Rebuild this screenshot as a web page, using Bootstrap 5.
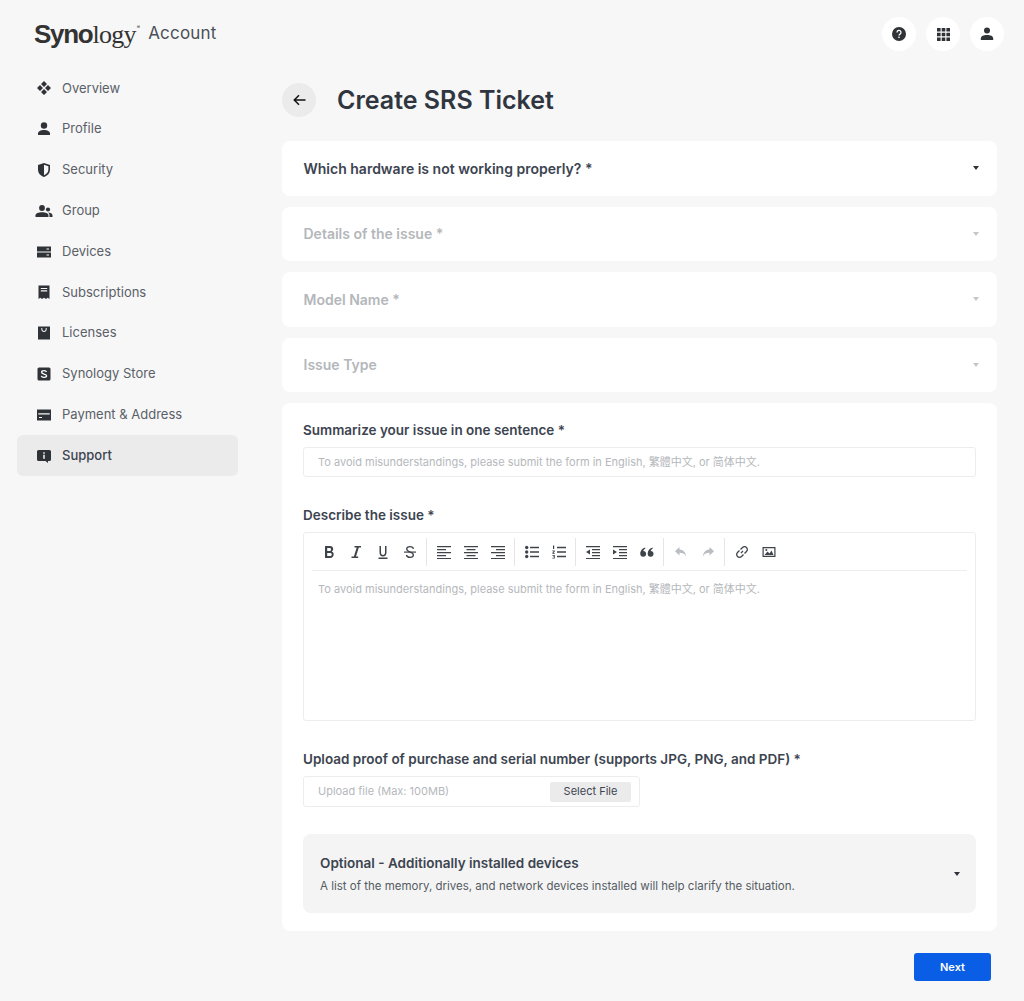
<!DOCTYPE html>
<html lang="en">
<head>
<meta charset="utf-8">
<title>Create SRS Ticket</title>
<link href="https://cdn.jsdelivr.net/npm/bootstrap@5.3.0/dist/css/bootstrap.min.css" rel="stylesheet">
<style>
html,body{height:1001px;overflow:hidden}
body{background:#f7f7f7;font-family:Inter,"Noto Sans CJK TC",sans-serif;color:#3c4450;font-size:13px}
.shell{width:1024px;height:1001px}
.top-bar{height:68px;padding:0 20px 0 34px}
.logo-mark{font-size:26px;line-height:1;color:#333;display:flex;align-items:baseline;letter-spacing:-1.3px}
.logo-a{font-family:"Liberation Sans",sans-serif;font-weight:700}
.logo-b{font-family:"Liberation Serif",serif;letter-spacing:-.7px}
.logo-r{font-size:5px;align-self:flex-start;margin:4px 0 0 1px;letter-spacing:0}
.logo-word{font-size:17px;margin-left:8px;color:#4a5058;letter-spacing:.2px}
.round-btn{width:34px;height:34px;border-radius:50%;background:#fff;border:0;padding:0;display:flex;align-items:center;justify-content:center}
.side-col{width:282px;padding-left:17px;flex:none}
.side-link{width:221px;height:40.8px;padding-left:19px;border-radius:6px;color:#5a6068;font-size:13px;text-decoration:none;gap:10px}
.side-link svg{width:16px;height:16px;flex:none;fill:#2f3237}
.side-link.here{background:#ebebeb;color:#3c4450;font-weight:500}
.main-col{width:715px;flex:none}
.title-row{height:73px;padding-top:15px;align-items:flex-start}
.back-btn{width:34px;height:34px;border-radius:50%;background:#ebebeb;border:0;padding:0;display:flex;align-items:center;justify-content:center}
.page-title{font-size:25px;line-height:34px;font-weight:600;color:#2f3640;margin:0 0 0 21px;letter-spacing:0}
.pick-card{height:54.5px;background:#fff;border-radius:8px;padding:0 18px 0 21.5px;margin-bottom:11px;font-size:14px;font-weight:600;color:#3c4450}
.pick-card.off{color:#b4b7bb}
.caret{width:0;height:0;border-left:3.5px solid transparent;border-right:3.5px solid transparent;border-top:4px solid #2f3237}
.off .caret{border-top-color:#c4c6c9}
.form-panel{background:#fff;border-radius:8px;height:528px;padding:18px 21px 0}
.fld-label{font-size:13.5px;line-height:18px;font-weight:600;color:#3c4450;margin:0 0 8px}
.fld-box{height:30px;border:1px solid #ededed;border-radius:3px;padding:0 14px;font-size:11px;color:#b5b8bc;margin-bottom:29px}
.editor-box{height:189px;border:1px solid #ededed;border-radius:3px;padding:0 8px 0 8px;margin-bottom:29px}
.tool-row{height:38px;border-bottom:1px solid #ededed}
.tool-grp{display:flex;align-items:center;height:28px;padding:0 3px 0 3px;border-right:1px solid #e6e6e6}
.tool-grp:last-child{border-right:0}
.tool{width:27px;height:20px;display:flex;align-items:center;justify-content:center}
.tool svg{width:14px;height:14px;fill:#3f444b}
.tool.dim svg{fill:#b9bcc0}
.editor-hint{font-size:11px;color:#b5b8bc;padding:10px 6px}
.upload-box{width:337px;height:31px;border:1px solid #ededed;border-radius:3px;padding:0 8px 0 14px;font-size:11px;color:#b5b8bc;margin-bottom:27px}
.pick-file{width:81px;height:20px;background:#ebebeb;border:0;border-radius:2px;font-size:11px;color:#3c4450;padding:0}
.opt-box{height:79px;background:#f4f4f4;border-radius:8px;padding:0 16px 0 17px}
.opt-title{font-size:13.5px;font-weight:600;color:#3c4450;line-height:18px;margin-bottom:6px}
.opt-sub{font-size:11.5px;color:#555b63;line-height:16px}
.foot-row{padding-top:22px;padding-right:6px}
.next-btn{width:77px;height:28px;background:#0a5ee6;color:#fff;border:0;border-radius:3px;font-size:11px;font-weight:600;padding:0}
</style>
</head>
<body>
<div class="shell d-flex flex-column">
  <header class="top-bar d-flex align-items-center justify-content-between">
    <div class="d-flex align-items-center">
      <div class="logo-mark"><span class="logo-a">Syno</span><span class="logo-b">logy</span><span class="logo-r">®</span></div>
      <span class="logo-word">Account</span>
    </div>
    <div class="d-flex gap-2 align-items-center" style="gap:10px!important">
      <button class="round-btn" aria-label="Help"><svg width="14" height="14" viewBox="0 0 14 14"><circle cx="7" cy="7" r="7" fill="#2f3237"/><path d="M5 5.4a2 2 0 1 1 3 1.7c-.7.4-1 .7-1 1.5" fill="none" stroke="#fff" stroke-width="1.3"/><rect x="6.3" y="9.6" width="1.4" height="1.4" fill="#fff"/></svg></button>
      <button class="round-btn" aria-label="Apps"><svg width="13" height="13" viewBox="0 0 13 13" fill="#2f3237"><path d="M0 0h3.6v3.6H0zM4.7 0h3.6v3.6H4.7zM9.4 0H13v3.6H9.4zM0 4.7h3.6v3.6H0zM4.7 4.7h3.6v3.6H4.7zM9.4 4.7H13v3.6H9.4zM0 9.4h3.6V13H0zM4.7 9.4h3.6V13H4.7zM9.4 9.4H13V13H9.4z"/></svg></button>
      <button class="round-btn" aria-label="Account"><svg width="14" height="14" viewBox="0 0 14 14" fill="#2f3237"><circle cx="7" cy="3.4" r="3"/><path d="M.8 13v-1.5C.8 9 3.6 7.9 7 7.9s6.200 1.100 6.200 3.600V13z"/></svg></button>
    </div>
  </header>
  <div class="d-flex flex-grow-1">
    <nav class="side-col d-flex flex-column">
      <a class="side-link d-flex align-items-center" href="#"><svg viewBox="0 0 16 16"><path d="M8 1l3 3-3 3-3-3zM4 5l3 3-3 3-3-3zM12 5l3 3-3 3-3-3zM8 9l3 3-3 3-3-3z"/></svg>Overview</a>
      <a class="side-link d-flex align-items-center" href="#"><svg viewBox="0 0 16 16"><circle cx="8" cy="4.500" r="3.200"/><path d="M2 14v-1.500C2 10.200 4.800 9 8 9s6 1.200 6 3.500V14z"/></svg>Profile</a>
      <a class="side-link d-flex align-items-center" href="#"><svg viewBox="0 0 16 16"><path fill-rule="evenodd" d="M8 1l6 2v4.500c0 3.600-2.500 6.300-6 7.500-3.500-1.200-6-3.900-6-7.500V3zm0 1.700v10.500c2.500-1 4.400-3 4.400-5.700V4.200z"/></svg>Security</a>
      <a class="side-link d-flex align-items-center" href="#"><svg viewBox="0 0 16 16" style="overflow:visible"><circle cx="6" cy="5" r="2.900"/><circle cx="12" cy="6.500" r="2.100"/><path d="M-.5 14v-1.500C-.5 10.500 2.500 9.300 6 9.300s6.500 1.200 6.500 3.200V14z"/><path d="M13.500 14v-1.600c0-1.200-.6-2.100-1.600-2.800 2.200 0 4.600.9 4.600 2.800V14z"/></svg>Group</a>
      <a class="side-link d-flex align-items-center" href="#"><svg viewBox="0 0 16 16"><path fill-rule="evenodd" d="M1 2.500h14v5H1zM1 8.500h14v5H1zM10.500 4.500v1h2.500v-1zM10.500 10.500v1h2.500v-1z"/></svg>Devices</a>
      <a class="side-link d-flex align-items-center" href="#"><svg viewBox="0 0 16 16"><path fill-rule="evenodd" d="M2.500 1.500h11V15l-1.800-1.200L10 15l-2-1.200L6 15l-1.700-1.200L2.500 15zM4.800 4v1h6.400V4zM4.800 6.300v1.200h6.400V6.300z"/></svg>Subscriptions</a>
      <a class="side-link d-flex align-items-center" href="#"><svg viewBox="0 0 16 16"><path fill-rule="evenodd" d="M2 1.500h12v13H2zM5.300 3v1c0 1.700 1.200 3 2.700 3s2.700-1.300 2.700-3V3h-1v1c0 1-.7 2-1.700 2s-1.700-1-1.700-2V3z"/></svg>Licenses</a>
      <a class="side-link d-flex align-items-center" href="#"><svg viewBox="0 0 16 16"><rect x="1.500" y="1.500" width="13" height="13" rx="1.500"/><path d="M10.500 6c-.3-1-1.200-1.300-2.500-1.300S5.600 5.300 5.600 6.300c0 2.300 5 1.200 5 3.500 0 1-1.100 1.600-2.600 1.600s-2.400-.5-2.700-1.600" fill="none" stroke="#fff" stroke-width="1.300"/></svg>Synology Store</a>
      <a class="side-link d-flex align-items-center" href="#"><svg viewBox="0 0 16 16"><path fill-rule="evenodd" d="M1 2.500h14v11H1zM2.300 6.200v1.300h11.400V6.200zM3 10v1h3v-1z"/></svg>Payment &amp; Address</a>
      <a class="side-link here d-flex align-items-center" href="#"><svg viewBox="0 0 16 16"><path fill-rule="evenodd" d="M2.500 2h11A1.500 1.500 0 0 1 15 3.500v8a1.500 1.500 0 0 1-1.500 1.500H12v2l-2.500-2h-7A1.500 1.500 0 0 1 1 11.500v-8A1.500 1.500 0 0 1 2.500 2zM7.200 4.200v1.500h1.600V4.200zM7.200 6.800v4h1.600v-4z"/></svg>Support</a>
    </nav>
    <main class="main-col d-flex flex-column">
      <div class="title-row d-flex">
        <button class="back-btn" aria-label="Back"><svg width="13" height="12" viewBox="0 0 13 12"><path d="M12.500 6H1.500M6 1.300L1.300 6 6 10.700" fill="none" stroke="#111" stroke-width="1.500"/></svg></button>
        <h1 class="page-title">Create SRS Ticket</h1>
      </div>
      <div class="pick-card d-flex align-items-center justify-content-between"><span>Which hardware is not working properly? *</span><span class="caret"></span></div>
      <div class="pick-card off d-flex align-items-center justify-content-between"><span>Details of the issue *</span><span class="caret"></span></div>
      <div class="pick-card off d-flex align-items-center justify-content-between"><span>Model Name *</span><span class="caret"></span></div>
      <div class="pick-card off d-flex align-items-center justify-content-between"><span>Issue Type</span><span class="caret"></span></div>
      <section class="form-panel">
        <div class="fld-label">Summarize your issue in one sentence *</div>
        <div class="fld-box d-flex align-items-center">To avoid misunderstandings, please submit the form in English, 繁體中文, or 简体中文.</div>
        <div class="fld-label">Describe the issue *</div>
        <div class="editor-box">
          <div class="tool-row d-flex align-items-center">
            <div class="tool-grp">
              <span class="tool"><svg viewBox="0 0 14 14"><path fill-rule="evenodd" d="M3 1h5c2 0 3.200 1.200 3.200 3 0 1.200-.6 2.100-1.500 2.500 1.200.4 2 1.400 2 2.800 0 2.200-1.500 3.700-3.700 3.700H3zm2.200 2v3h2.500c.9 0 1.300-.7 1.300-1.500S8.600 3 7.700 3zm0 5v3h3c1 0 1.600-.6 1.600-1.500S9.200 8 8.200 8z"/></svg></span>
              <span class="tool"><svg viewBox="0 0 14 14"><path d="M5.500 1h6.500v1.600h-2.200L7 11.400h2.200V13H2.500v-1.600h2.400l2.800-8.800H5.500z"/></svg></span>
              <span class="tool"><svg viewBox="0 0 14 14"><path d="M3.500 1h1.500v6.500c0 1.500.7 2.500 2 2.500s2-1 2-2.500V1h1.500v6.500c0 2.500-1.300 4-3.500 4s-3.500-1.500-3.500-4zM2.500 12.500h9V14h-9z"/></svg></span>
              <span class="tool"><svg viewBox="0 0 14 14"><path d="M1 6.500h12v1.200H1z"/><path d="M10.500 3.800C10.200 2.500 8.900 1.700 7 1.700c-2 0-3.300 1-3.300 2.400 0 3.700 6.700 2.500 6.700 5.900 0 1.400-1.400 2.300-3.400 2.300S3.700 11.400 3.400 10" fill="none" stroke="#3f444b" stroke-width="1.300"/></svg></span>
            </div>
            <div class="tool-grp">
              <span class="tool"><svg viewBox="0 0 14 14"><path d="M0 1h14v1.300H0zM0 4h9v1.300H0zM0 7h14v1.300H0zM0 10h9v1.300H0zM0 13h14v1H0z"/></svg></span>
              <span class="tool"><svg viewBox="0 0 14 14"><path d="M0 1h14v1.300H0zM2.500 4h9v1.300h-9zM0 7h14v1.300H0zM2.500 10h9v1.300h-9zM0 13h14v1H0z"/></svg></span>
              <span class="tool"><svg viewBox="0 0 14 14"><path d="M0 1h14v1.300H0zM5 4h9v1.300H5zM0 7h14v1.300H0zM5 10h9v1.300H5zM0 13h14v1H0z"/></svg></span>
            </div>
            <div class="tool-grp">
              <span class="tool"><svg viewBox="0 0 14 14"><circle cx="1.700" cy="2.500" r="1.700"/><circle cx="1.700" cy="7" r="1.700"/><circle cx="1.700" cy="11.500" r="1.700"/><path d="M5 1.800h9v1.400H5zM5 6.300h9v1.400H5zM5 10.800h9v1.400H5z"/></svg></span>
              <span class="tool"><svg viewBox="0 0 14 14"><path d="M1 .5h1.200v3.500H1zM.3 5.500h2.500v1L1.500 8h1.300v.8H.3v-.7l1.400-1.800H.3zM.3 10h2.500v3.500H.3v-.7h1.700v-.7H1v-.6h1v-.7H.3zM5 1.800h9v1.400H5zM5 6.300h9v1.400H5zM5 10.800h9v1.400H5z"/></svg></span>
            </div>
            <div class="tool-grp">
              <span class="tool"><svg viewBox="0 0 14 14"><path d="M0 1h14v1.300H0zM6 4h8v1.300H6zM6 7h8v1.300H6zM6 10h8v1.300H6zM0 13h14v1H0zM4 4.500v5L0 7z"/></svg></span>
              <span class="tool"><svg viewBox="0 0 14 14"><path d="M0 1h14v1.300H0zM6 4h8v1.300H6zM6 7h8v1.300H6zM6 10h8v1.300H6zM0 13h14v1H0zM0 4.500v5L4 7z"/></svg></span>
              <span class="tool"><svg viewBox="0 0 14 14"><circle cx="3.200" cy="8.800" r="2.900"/><path d="M.4 8.500C.4 5.500 2 3.500 5 2.500l.4 1C4 4.300 3 5.600 3 7.500z"/><circle cx="10.600" cy="8.800" r="2.900"/><path d="M7.800 8.500c0-3 1.600-5 4.600-6l.4 1c-1.400.8-2.400 2.100-2.400 4z"/></svg></span>
            </div>
            <div class="tool-grp">
              <span class="tool dim"><svg viewBox="0 0 14 14"><path d="M5.500 2L1 6.200l4.500 4.200V7.800c3 0 5 .7 6.500 3.700-.3-4.500-2.700-6.700-6.500-7z"/></svg></span>
              <span class="tool dim"><svg viewBox="0 0 14 14"><path d="M8.500 2L13 6.200l-4.500 4.200V7.800c-3 0-5 .7-6.500 3.700.3-4.500 2.700-6.700 6.500-7z"/></svg></span>
            </div>
            <div class="tool-grp">
              <span class="tool"><svg viewBox="0 0 14 14"><path d="M6 8l2-2M5.500 4.500l2-2a2.500 2.500 0 0 1 4 4l-2 2M8.500 9.500l-2 2a2.500 2.500 0 0 1-4-4l2-2" fill="none" stroke="#3f444b" stroke-width="1.300"/></svg></span>
              <span class="tool"><svg viewBox="0 0 14 14"><path fill-rule="evenodd" d="M.5 2h13v10H.5zM1.700 3.200v7.600h10.600V3.200z"/><path d="M2.500 10l3-3.500 2 2 2-3 2 4.500z"/><circle cx="4.300" cy="5" r="1"/></svg></span>
            </div>
          </div>
          <div class="editor-hint">To avoid misunderstandings, please submit the form in English, 繁體中文, or 简体中文.</div>
        </div>
        <div class="fld-label">Upload proof of purchase and serial number (supports JPG, PNG, and PDF) *</div>
        <div class="upload-box d-flex align-items-center justify-content-between"><span>Upload file (Max: 100MB)</span><button class="pick-file">Select File</button></div>
        <div class="opt-box d-flex align-items-center justify-content-between">
          <div>
            <div class="opt-title">Optional - Additionally installed devices</div>
            <div class="opt-sub">A list of the memory, drives, and network devices installed will help clarify the situation.</div>
          </div>
          <span class="caret"></span>
        </div>
      </section>
      <div class="foot-row d-flex justify-content-end"><button class="next-btn">Next</button></div>
    </main>
  </div>
</div>
<script src="https://cdn.jsdelivr.net/npm/bootstrap@5.3.0/dist/js/bootstrap.bundle.min.js"></script>
</body>
</html>
